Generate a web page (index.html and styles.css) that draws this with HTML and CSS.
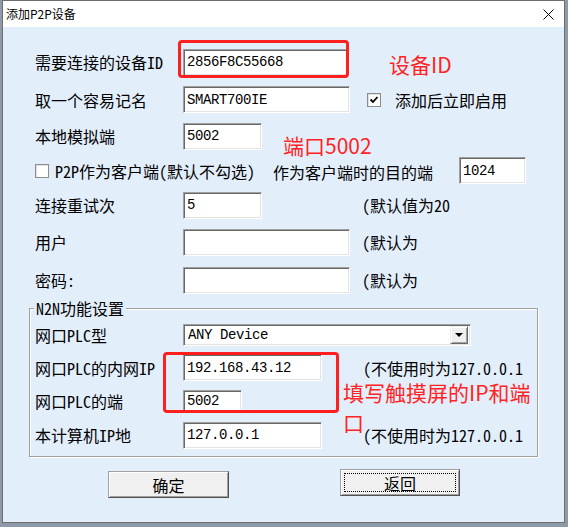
FILE: index.html
```html
<!DOCTYPE html>
<html lang="zh-CN">
<head>
	<meta charset="UTF-8">
	<title>添加P2P设备</title>
	<link rel="stylesheet" href="styles.css">
</head>
<body>
	<div class="window">
		<div class="titlebar">
			<span class="title">添加P2P设备</span>
			<svg class="close" width="11" height="11" viewBox="0 0 11 11"><path d="M0.5 0.5 L10.5 10.5 M10.5 0.5 L0.5 10.5" stroke="#000" stroke-width="1" fill="none"/></svg>
		</div>

		<div class="client">
			<div class="form">
				<div class="row">
					<span class="lbl">需要连接的设备ID</span>
					<div class="edit w-long">2856F8C55668</div>
				</div>
				<div class="row">
					<span class="lbl">取一个容易记名</span>
					<div class="edit w-long">SMART700IE</div>
					<span class="check checked"><svg width="10" height="10" viewBox="0 0 10 10"><path d="M1.5 4.5 L4 7 L8.5 2" stroke="#000" stroke-width="1.8" fill="none"/></svg></span>
					<span class="check-text">添加后立即启用</span>
				</div>
				<div class="row">
					<span class="lbl">本地模拟端</span>
					<div class="edit w-short">5002</div>
				</div>
				<div class="row">
					<span class="check"></span>
					<span class="p2p-text">P2P作为客户端(默认不勾选)</span>
					<span class="dest-text">作为客户端时的目的端</span>
					<div class="edit w-dest">1024</div>
				</div>
				<div class="row">
					<span class="lbl">连接重试次</span>
					<div class="cell"><div class="edit w-short">5</div></div>
					<span class="hint">(默认值为20</span>
				</div>
				<div class="row">
					<span class="lbl">用户</span>
					<div class="cell"><div class="edit w-long"></div></div>
					<span class="hint">(默认为</span>
				</div>
				<div class="row">
					<span class="lbl">密码:</span>
					<div class="cell"><div class="edit w-long"></div></div>
					<span class="hint">(默认为</span>
				</div>
			</div>

			<fieldset class="group">
				<legend>N2N功能设置</legend>
				<div class="group-rows">
					<div class="row">
						<span class="lbl">网口PLC型</span>
						<div class="combo">
							<span class="combo-value">ANY Device</span>
							<span class="combo-btn"><i class="arrow"></i></span>
						</div>
					</div>
					<div class="row">
						<span class="lbl">网口PLC的内网IP</span>
						<div class="cell cell-wide"><div class="edit w-mid">192.168.43.12</div></div>
						<span class="hint">(不使用时为127.0.0.1</span>
					</div>
					<div class="row">
						<span class="lbl">网口PLC的端</span>
						<div class="edit w-port">5002</div>
					</div>
					<div class="row">
						<span class="lbl">本计算机IP地</span>
						<div class="cell cell-wide"><div class="edit w-mid">127.0.0.1</div></div>
						<span class="hint">(不使用时为127.0.0.1</span>
					</div>
				</div>
			</fieldset>

			<div class="buttons">
				<div class="btn btn-ok">确定</div>
				<div class="btn btn-back"><span class="focus"></span>返回</div>
			</div>

			<!-- red annotations drawn over the dialog -->
			<div class="mark mark-id"></div>
			<div class="mark mark-plc"></div>
			<div class="note note-id">设备ID</div>
			<div class="note note-port">端口5002</div>
			<div class="note note-plc">填写触摸屏的IP和端<span class="note-line">口</span></div>
		</div>
	</div>
</body>
</html>
```

FILE: styles.css
```css
html,
body {
	margin: 0;
	padding: 0;
}

body {
	width: 568px;
	height: 527px;
	overflow: hidden;
	background-color: #8f9aa8;
	font-family: "Noto Sans Mono CJK SC", "Noto Sans CJK SC", monospace;
	font-size: 16px;
	color: #000;
}

.window {
	margin-left: 2px;
	width: 561px;
	height: 521px;
	border: 1px solid #6e6e6e;
	background-color: #e3eefb;
	display: flex;
	flex-direction: column;
}

.titlebar {
	height: 26px;
	flex: none;
	background-color: #fff;
	display: flex;
	align-items: center;
	padding-left: 3px;
}

.title {
	font-family: "Noto Sans CJK SC", sans-serif;
	font-size: 12px;
	line-height: 14px;
}

.close {
	margin-left: auto;
	margin-right: 10px;
}

.client {
	position: relative;
	flex: 1;
	padding: 16px 0 0 26px;
}

.form {
	display: grid;
	grid-template-rows: 38px 37px 36px 33px 36px 38px 38px;
	padding-left: 6px;
}

.row {
	display: flex;
	align-items: center;
}

.lbl {
	width: 148px;
	flex: none;
	line-height: 18px;
	white-space: nowrap;
}

.edit {
	box-sizing: border-box;
	height: 27px;
	flex: none;
	background-color: #fff;
	border: 1px solid;
	border-color: #a0a0a0 #fff #fff #a0a0a0;
	box-shadow: inset 1px 1px #696969, inset -1px -1px #e3e3e3;
	padding: 0 3px;
	display: flex;
	align-items: center;
	font-family: "Liberation Mono", monospace;
	font-size: 14px;
	letter-spacing: -0.4px;
	white-space: nowrap;
	overflow: hidden;
}

.w-long {
	width: 167px;
}

.w-short {
	width: 79px;
}

.w-mid {
	width: 139px;
}

.w-dest {
	width: 67px;
}

.w-port {
	width: 59px;
	height: 23px;
}

.cell {
	width: 179px;
	flex: none;
}

.cell-wide {
	width: 180px;
}

.hint {
	line-height: 18px;
	white-space: nowrap;
}

.check {
	box-sizing: border-box;
	width: 14px;
	height: 14px;
	flex: none;
	background-color: #fff;
	border: 1px solid #8d8d8d;
	box-shadow: inset 1px 1px #e0e0e0;
	display: flex;
	align-items: center;
	justify-content: center;
}

.checked {
	margin-left: 17px;
}

.check-text {
	margin-left: 14px;
	line-height: 18px;
}

.p2p-text {
	width: 218px;
	margin-left: 6px;
	line-height: 18px;
	white-space: nowrap;
}

.dest-text {
	width: 186px;
	line-height: 18px;
	white-space: nowrap;
	margin-top: 3px;
}

/* N2N group */
.group {
	box-sizing: border-box;
	width: 509px;
	margin: 0;
	padding: 1px 0 4px 5px;
	border: 1px solid #a0a0a0;
	box-shadow: 1px 1px 0 #fff, inset 1px 1px 0 #fff;
}

.group legend {
	padding: 0 2px;
	margin-left: -1px;
	line-height: 18px;
	background-color: #e3eefb;
}

.group-rows {
	display: grid;
	grid-template-rows: 33px 33px 34px 34px;
}

.combo {
	box-sizing: border-box;
	width: 288px;
	height: 22px;
	background-color: #fff;
	border: 1px solid;
	border-color: #a0a0a0 #fff #fff #a0a0a0;
	box-shadow: inset 1px 1px #696969, inset -1px -1px #e3e3e3;
	display: flex;
	align-items: center;
	padding: 2px;
}

.combo-value {
	padding-left: 2px;
	font-family: "Liberation Mono", monospace;
	font-size: 14px;
	letter-spacing: -0.4px;
}

.combo-btn {
	box-sizing: border-box;
	margin-left: auto;
	width: 18px;
	height: 18px;
	background-color: #f0f0f0;
	border: 1px solid;
	border-color: #f0f0f0 #696969 #696969 #f0f0f0;
	box-shadow: inset 1px 1px #fff, inset -1px -1px #a0a0a0;
	display: flex;
	align-items: center;
	justify-content: center;
}

.arrow {
	width: 0;
	height: 0;
	border-left: 4px solid transparent;
	border-right: 4px solid transparent;
	border-top: 4px solid #000;
}

/* buttons */
.buttons {
	display: flex;
	align-items: flex-start;
	margin-top: 12px;
	padding-left: 79px;
}

.btn {
	position: relative;
	box-sizing: border-box;
	width: 121px;
	height: 27px;
	background-color: #f0f0f0;
	border: 1px solid;
	border-color: #a0a0a0 #505050 #505050 #a0a0a0;
	box-shadow: inset 1px 1px #fff, inset -1px -1px #a0a0a0;
	display: flex;
	align-items: center;
	justify-content: center;
	line-height: 18px;
}

.btn-ok {
	margin-top: 2px;
}

.btn-back {
	width: 120px;
	margin-left: 111px;
}

.focus {
	position: absolute;
	top: 3px;
	left: 3px;
	right: 3px;
	bottom: 3px;
	border: 1px dotted #000;
}

/* red annotations */
.mark {
	position: absolute;
	box-sizing: border-box;
	border: 3px solid #ff1f1f;
	border-radius: 4px;
}

.mark-id {
	left: 175px;
	top: 13px;
	width: 171px;
	height: 38px;
}

.mark-plc {
	left: 160px;
	top: 325px;
	width: 176px;
	height: 61px;
}

.note {
	position: absolute;
	font-family: "Noto Sans CJK SC", sans-serif;
	font-size: 21px;
	line-height: 26px;
	color: #ff2424;
	white-space: nowrap;
}

.note-id {
	left: 386px;
	top: 24px;
}

.note-port {
	left: 280px;
	top: 105px;
}

.note-plc {
	left: 340px;
	top: 354px;
	line-height: 22px;
}

.note-line {
	display: block;
	margin-top: 8px;
}
```
